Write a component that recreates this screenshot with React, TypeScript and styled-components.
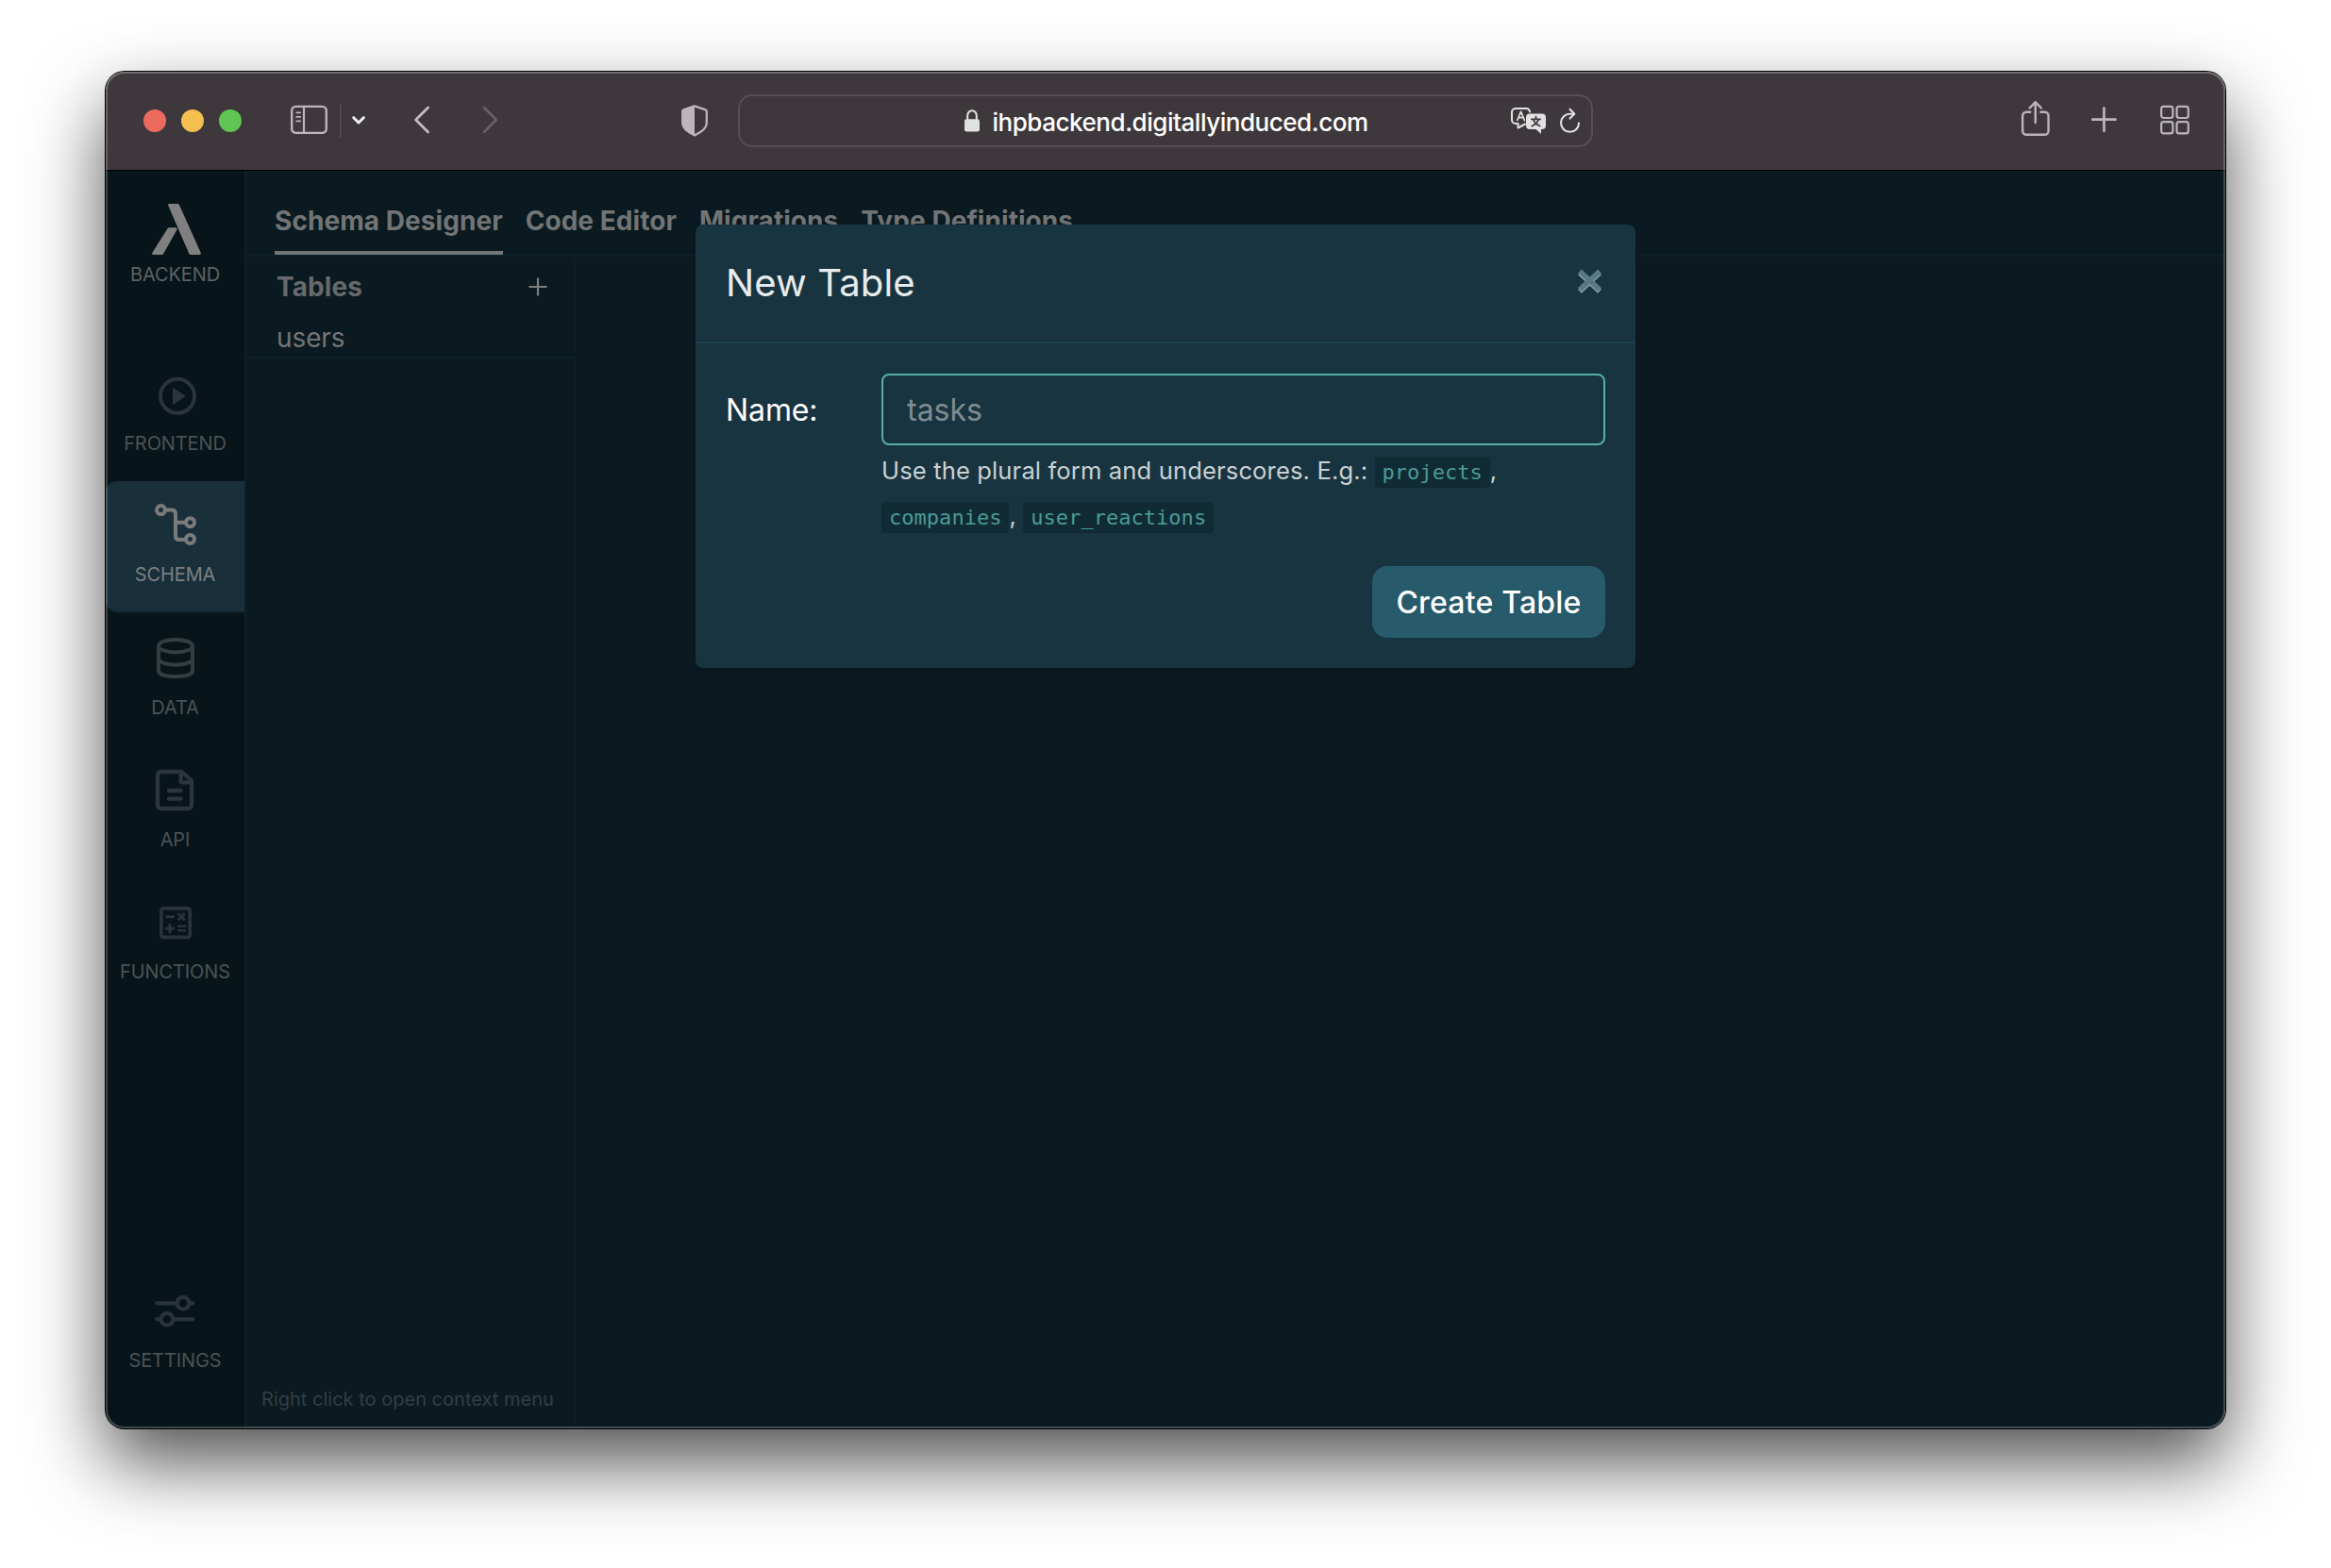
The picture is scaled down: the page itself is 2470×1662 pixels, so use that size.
import React from "react";
import styled, { createGlobalStyle } from "styled-components";

const GlobalStyle = createGlobalStyle`
  *, *::before, *::after { box-sizing: border-box; }
  body {
    margin: 0;
    background: #fff;
    font-family: Inter, "Liberation Sans", sans-serif;
    -webkit-font-smoothing: antialiased;
  }
  svg { display: block; flex: none; overflow: visible; }
`;

const Desktop = styled.div`
  width: 2470px;
  height: 1662px;
  padding: 76px 112px 148px;
  overflow: hidden;
`;

const Window = styled.div`
  position: relative;
  display: flex;
  flex-direction: column;
  height: 100%;
  border-radius: 20px;
  overflow: hidden;
  box-shadow: 0 0 0 1px #000, 0 36px 80px rgba(0, 0, 0, 0.69);

  &::after {
    content: "";
    position: absolute;
    inset: 0;
    z-index: 3;
    border-radius: 20px;
    box-shadow: inset 0 0 0 2px rgba(255, 255, 255, 0.22), inset 0 1px 0 rgba(255, 255, 255, 0.14);
    pointer-events: none;
  }
`;

/* ---------- browser chrome ---------- */

const TitleBar = styled.header`
  display: flex;
  align-items: center;
  height: 105px;
  flex: none;
  background: #3e383c;
  border-bottom: 1px solid #000;
  color: #bcb6bb;
`;

const Zone = styled.div<{ $end?: boolean }>`
  width: 670px;
  flex: none;
  display: flex;
  align-items: center;
  justify-content: ${(p) => (p.$end ? "flex-end" : "flex-start")};
  padding: ${(p) => (p.$end ? "0 38px 0 0" : "0 32px 0 40px")};
`;

const Lights = styled.div`
  display: flex;
  gap: 16px;
  margin-right: 52px;
`;

const Light = styled.span<{ $color: string }>`
  width: 24px;
  height: 24px;
  border-radius: 50%;
  background: ${(p) => p.$color};
`;

const Divider = styled.span`
  width: 2px;
  height: 36px;
  margin: 0 11px 0 13px;
  background: #504a4e;
`;

const NavArrows = styled.div`
  display: flex;
  gap: 56px;
  margin-left: 52px;
  margin-right: auto;
`;

const AddressBar = styled.div`
  display: grid;
  grid-template-columns: 1fr auto 1fr;
  align-items: center;
  width: 906px;
  height: 56px;
  padding: 0 12px 0 14px;
  border: 2px solid #565055;
  border-radius: 15px;
`;

const Url = styled.div`
  grid-column: 2;
  display: flex;
  align-items: center;
  gap: 13px;
  color: #fff;
  font-size: 26px;
  font-weight: 500;
  line-height: 32px;
  letter-spacing: -0.46px;

  span { padding-top: 3px; }
`;

const BarActions = styled.div`
  display: flex;
  justify-content: flex-end;
  gap: 15px;
  color: #e2e0e2;
`;

const WindowActions = styled.div`
  display: flex;
  gap: 44px;

  svg:last-child { margin-left: 2px; }
`;

/* ---------- application ---------- */

const Page = styled.div`
  position: relative;
  display: flex;
  flex: 1;
  min-height: 0;
  background: #0b1a20;
`;

const Sidebar = styled.nav`
  display: flex;
  flex-direction: column;
  width: 149px;
  padding: 35px 0 32px;
  background: #071419;
  border-right: 2px solid #0c2027;
`;

const Brand = styled.div`
  display: flex;
  flex-direction: column;
  align-items: center;
  gap: 9px;
  height: 154px;
  flex: none;

  svg { margin-left: 3px; }
`;

const NavLabel = styled.span<{ $color: string }>`
  color: ${(p) => p.$color};
  font-size: 20px;
  font-weight: 400;
  line-height: 24px;
  letter-spacing: -0.1px;
`;

const NavItem = styled.a<{ $active?: boolean; $last?: boolean }>`
  display: flex;
  flex-direction: column;
  align-items: center;
  gap: ${(p) => (p.$active ? 15 : 16)}px;
  height: 140px;
  flex: none;
  padding-top: 24px;
  margin-top: ${(p) => (p.$last ? "auto" : 0)};
  border-radius: 12px 0 0 12px;
  border-bottom: 2px solid ${(p) => (p.$active ? "#0d222a" : "transparent")};
  background: ${(p) => (p.$active ? "#192f3a" : "transparent")};
  background-clip: padding-box;
`;

const Main = styled.main`
  flex: 1;
  display: flex;
  flex-direction: column;
  min-width: 0;
`;

const Tabs = styled.div`
  display: flex;
  align-items: flex-end;
  gap: 24px;
  height: 91px;
  flex: none;
  padding-left: 30px;
  border-bottom: 2px solid #0c2027;
`;

const Tab = styled.a<{ $active?: boolean }>`
  padding-bottom: 15px;
  border-bottom: 4px solid ${(p) => (p.$active ? "#737677" : "transparent")};
  color: #727576;
  font-size: 28px;
  font-weight: 700;
  line-height: 34px;
  letter-spacing: 0.06px;
  white-space: nowrap;
`;

const TablePanel = styled.section`
  flex: 1;
  display: flex;
  flex-direction: column;
  width: 350px;
  border-right: 2px solid #0c1e25;
`;

const PanelHeader = styled.div`
  display: flex;
  align-items: center;
  justify-content: space-between;
  padding: 15px 29px 0 32px;
  color: #666a6c;
  font-size: 28px;
  font-weight: 700;
  line-height: 34px;
  letter-spacing: 0.1px;
`;

const TableRow = styled.div`
  margin-top: 20px;
  padding: 0 32px 3px;
  border-bottom: 2px solid #0c2027;
  color: #737678;
  font-size: 28px;
  font-weight: 400;
  line-height: 34px;
  letter-spacing: -0.1px;
`;

const Note = styled.p`
  margin: auto 0 19px;
  padding-left: 16px;
  color: #343e43;
  font-size: 20px;
  font-weight: 400;
  line-height: 24px;
  letter-spacing: 0.01px;
  white-space: nowrap;
`;

/* ---------- modal ---------- */

const Overlay = styled.div`
  position: absolute;
  inset: 0;
  z-index: 2;
  display: flex;
  justify-content: center;
  align-items: flex-start;
  padding-top: 57px;
`;

const Modal = styled.div`
  width: 996px;
  border-radius: 8px;
  background: #183440;
  box-shadow: 0 1px 5px rgba(0, 0, 0, 0.22);
`;

const ModalHeader = styled.div`
  display: flex;
  justify-content: space-between;
  align-items: flex-start;
  height: 126px;
  padding: 38px 36px 0 32px;
  border-bottom: 2px solid #1e404f;
`;

const Title = styled.h5`
  margin: 0;
  color: #e8ebec;
  font-size: 40px;
  font-weight: 430;
  line-height: 48px;
  letter-spacing: 0.13px;
`;

const CloseButton = styled.button`
  margin: 9px 0 0;
  padding: 0;
  border: 0;
  background: none;
`;

const Form = styled.form`
  display: flex;
  flex-direction: column;
  padding: 32px;
`;

const Field = styled.div`
  display: grid;
  grid-template-columns: 165px 1fr;
`;

const Label = styled.label`
  padding-top: 20px;
  color: #fff;
  font-size: 32px;
  font-weight: 380;
  line-height: 38px;
  letter-spacing: -0.1px;
`;

const Input = styled.input`
  width: 100%;
  height: 76px;
  padding: 0 24px 0 25px;
  border: 2px solid #56b0a8;
  border-radius: 8px;
  outline: none;
  background: transparent;
  font: 380 32px Inter, "Liberation Sans", sans-serif;

  &::placeholder { color: #7f8d92; opacity: 1; }
`;

const Hint = styled.small`
  display: block;
  margin-top: 3px;
  color: #c9d1d4;
  font-size: 25.6px;
  font-weight: 370;
  line-height: 48px;
  letter-spacing: 0.12px;
`;

const Code = styled.code`
  padding: 4px 8px;
  border-radius: 4px;
  background: #102b36;
  color: #4b9c94;
  font: 22px "DejaVu Sans Mono", monospace;
  letter-spacing: 0.03px;
`;

const Submit = styled.button`
  align-self: flex-end;
  width: 247px;
  height: 76px;
  margin-top: 29px;
  padding: 0;
  border: 0;
  border-radius: 16px;
  background: #275a6a;
  color: #fff;
  font: 450 32px Inter, "Liberation Sans", sans-serif;
  letter-spacing: 0.2px;
`;

/* ---------- icons ---------- */

const line = { fill: "none", stroke: "currentColor", strokeLinecap: "round", strokeLinejoin: "round" } as const;

const SidebarIcon = () => (
  <svg width="39" height="44" {...line}>
    <rect x="1.2" y="6.9" width="36.6" height="28" rx="4.5" strokeWidth="2.4" />
    <path d="M14 7v28" strokeWidth="2.2" />
    <path d="M6.2 13.3h4M6.2 17.9h4M6.2 22.4h4" strokeWidth="1.7" />
  </svg>
);

const ChevronIcon = () => (
  <svg width="14" height="44" {...line} stroke="#f1eff1" strokeWidth="3">
    <path d="M1.7 18.7 7 24l5.3-5.3" />
  </svg>
);

const ArrowIcon = ({ forward }: { forward?: boolean }) => (
  <svg width="16" height="44" {...line} stroke={forward ? "#665f65" : "#c4bec3"} strokeWidth="2.7">
    <path d={forward ? "M2 8l12.8 13L2 34" : "M14.6 8 1.6 21l13 13"} />
  </svg>
);

const ShieldIcon = () => (
  <svg width="28" height="44" {...line} strokeWidth="2.3">
    <path d="M14 6.4 2.4 10.3Q1.2 10.8 1.2 12v12.5c0 5.6 4.8 9.2 12.8 12.9 8-3.7 12.8-7.3 12.8-12.9V12q0-1.2-1.2-1.7Z" />
    <path d="M14 6.4 2.4 10.3Q1.2 10.8 1.2 12v12.5c0 5.6 4.8 9.2 12.8 12.9Z" fill="currentColor" stroke="none" />
  </svg>
);

const LockIcon = () => (
  <svg width="16" height="24" viewBox="0 0 16 24">
    <path d="M3.2 12V6.6a4.8 5.4 0 0 1 9.6 0V12" fill="none" stroke="#e2e1e2" strokeWidth="2" />
    <rect y="10.2" width="16" height="13.3" rx="2.2" fill="#e2e1e2" />
  </svg>
);

const TranslateIcon = () => (
  <svg width="37" height="28" {...line} strokeWidth="2">
    <path d="M15 17.5 7.6 21.5v-4.5H5a4 4 0 0 1-4-4V5a4 4 0 0 1 4-4h11a4 4 0 0 1 4 3.5" />
    <path d="M6.8 13.5 10.6 4.3l3.8 9.2M8 10.6h5.2" strokeWidth="1.7" />
    <path d="M20 6.5h13a4 4 0 0 1 4 4V19a4 4 0 0 1-4 4h-1v5l-5.5-5H20a4 4 0 0 1-4-4v-8.5a4 4 0 0 1 4-4Z" fill="currentColor" stroke="none" />
    <path d="M26.5 9.5v2.3M21.8 12.3h9.4M29.3 12.5q-1.5 5-7 7M23.7 12.5q1.5 5 7 7" stroke="#3e383c" strokeWidth="1.7" />
  </svg>
);

const ReloadIcon = () => (
  <svg width="21" height="28" {...line} strokeWidth="2.1">
    <path d="M20 16.5a9.5 9.5 0 1 1-9.5-9.7h4" />
    <path d="M10.5 1.8 15.3 6.7l-4.8 4.9" />
  </svg>
);

const ShareIcon = () => (
  <svg width="30" height="44" {...line} strokeWidth="2.4">
    <path d="M9.3 12.8H5.2a4 4 0 0 0-4 4v16a4 4 0 0 0 4 4h19.4a4 4 0 0 0 4-4v-16a4 4 0 0 0-4-4h-4.1M14.8 24V2.8M8.7 8.5l6.1-6.3 6.1 6.3" />
  </svg>
);

const PlusIcon = () => (
  <svg width="27" height="44" {...line} strokeWidth="2.7">
    <path d="M1.4 20.7h24.2M13.5 8.6v24.2" />
  </svg>
);

const GridIcon = () => (
  <svg width="31" height="44" {...line} strokeWidth="2.2">
    {[1.2, 17.6].map((x) =>
      [6.8, 23.2].map((y) => <rect key={`${x}-${y}`} x={x} y={y} width="12.2" height="12.2" rx="2.4" />)
    )}
  </svg>
);

const LogoIcon = () => (
  <svg width="52" height="54" fill="#808080" stroke="#808080" strokeWidth="3" strokeLinejoin="round">
    <path d="M18.7 1.5h8.8L50.4 52.5h-9.6Z" />
    <path d="M18 26.7h7.2L10.7 52.5H1.7Z" />
  </svg>
);

const PlayIcon = () => (
  <svg width="49" height="48">
    <circle cx="27" cy="25.8" r="18" fill="none" stroke="#2b343b" strokeWidth="4" />
    <path d="M22 16.6v18.6l13.7-9.3Z" fill="#2b343b" />
  </svg>
);

const SchemaIcon = () => (
  <svg width="49" height="48" fill="none" stroke="#7b7b7b" strokeWidth="4">
    <circle cx="9.5" cy="6.6" r="4.5" />
    <circle cx="40.5" cy="19.7" r="4.5" />
    <circle cx="40.5" cy="37.4" r="4.5" />
    <path d="M14 6.6h7q4 0 4 4v23.4q0 4 4 4h7M25 19.7h11" />
  </svg>
);

const DataIcon = () => (
  <svg width="49" height="48" fill="none" stroke="#363d40" strokeWidth="4">
    <ellipse cx="25" cy="10.7" rx="18" ry="6.7" />
    <path d="M7 10.7v26.3C7 40.5 14 43 25 43s18-2.5 18-6V10.7" />
    <path d="M7 24c0 4 8 6.7 18 6.7S43 28 43 24" />
  </svg>
);

const ApiIcon = () => (
  <svg width="49" height="48" fill="none" stroke="#2c353c" strokeWidth="4.3" strokeLinecap="round" strokeLinejoin="round">
    <path d="M31.5 4H9.5A3.5 3.5 0 0 0 6 7.5v32A3.5 3.5 0 0 0 9.5 43h29a3.5 3.5 0 0 0 3.5-3.5V13.5Z" />
    <path d="M30.7 5v10.3h10.5M18 24h12.5M18 32.7h12.5" />
  </svg>
);

const FunctionsIcon = () => (
  <svg width="49" height="48" fill="none" stroke="#2a333a" strokeWidth="3">
    <rect x="9.8" y="8.9" width="30.4" height="30.4" rx="2.5" strokeWidth="3.7" />
    <path d="M14.3 17.7H24M27.8 14.2l7 7M34.8 14.2l-7 7M14 30.2h10M19 25.2v10" />
    <path d="M27 27.7h9M27 32.3h9" strokeWidth="2.6" />
  </svg>
);

const SettingsIcon = () => (
  <svg width="49" height="48" fill="none" stroke="#2a333a" strokeWidth="4.2" strokeLinecap="round">
    <path d="M5.2 15.3h22M40 15.3h3.5M5.2 32.3h4M23 32.3h20.5" />
    <circle cx="33" cy="15.3" r="6.4" />
    <circle cx="16" cy="32.3" r="6.4" />
  </svg>
);

const AddIcon = () => (
  <svg width="20" height="20" stroke="#7b7e80" strokeWidth="2.2">
    <path d="M.5 10h19M10 .5v19" />
  </svg>
);

const CloseIcon = () => (
  <svg width="25" height="25" strokeWidth="5.6">
    <path d="M2 4.2 23 23.7M23 4.2 2 23.7" stroke="#8fa2aa" />
    <path d="M2 2.5 23 22M23 2.5 2 22" stroke="#5a7987" />
  </svg>
);

const navItems = [
  { label: "FRONTEND", Icon: PlayIcon },
  { label: "SCHEMA", Icon: SchemaIcon, active: true },
  { label: "DATA", Icon: DataIcon },
  { label: "API", Icon: ApiIcon },
  { label: "FUNCTIONS", Icon: FunctionsIcon },
  { label: "SETTINGS", Icon: SettingsIcon, last: true },
];

const tabs = ["Schema Designer", "Code Editor", "Migrations", "Type Definitions"];

export default function App() {
  return (
    <Desktop>
      <GlobalStyle />
      <Window>
        <TitleBar>
          <Zone>
            <Lights>
              <Light $color="#ed6a5e" />
              <Light $color="#f5bf4f" />
              <Light $color="#61c554" />
            </Lights>
            <SidebarIcon />
            <Divider />
            <ChevronIcon />
            <NavArrows>
              <ArrowIcon />
              <ArrowIcon forward />
            </NavArrows>
            <ShieldIcon />
          </Zone>
          <AddressBar>
            <Url>
              <LockIcon />
              <span>ihpbackend.digitallyinduced.com</span>
            </Url>
            <BarActions>
              <TranslateIcon />
              <ReloadIcon />
            </BarActions>
          </AddressBar>
          <Zone $end>
            <WindowActions>
              <ShareIcon />
              <PlusIcon />
              <GridIcon />
            </WindowActions>
          </Zone>
        </TitleBar>
        <Page>
          <Sidebar>
            <Brand>
              <LogoIcon />
              <NavLabel $color="#5c6264">BACKEND</NavLabel>
            </Brand>
            {navItems.map(({ label, Icon, active, last }) => (
              <NavItem key={label} $active={active} $last={last}>
                <Icon />
                <NavLabel $color={active ? "#7c8082" : "#4b5255"}>{label}</NavLabel>
              </NavItem>
            ))}
          </Sidebar>
          <Main>
            <Tabs>
              {tabs.map((tab, i) => (
                <Tab key={tab} $active={i === 0}>{tab}</Tab>
              ))}
            </Tabs>
            <TablePanel>
              <PanelHeader>
                Tables
                <AddIcon />
              </PanelHeader>
              <TableRow>users</TableRow>
              <Note>Right click to open context menu</Note>
            </TablePanel>
          </Main>
          <Overlay>
            <Modal>
              <ModalHeader>
                <Title>New Table</Title>
                <CloseButton type="button" aria-label="Close">
                  <CloseIcon />
                </CloseButton>
              </ModalHeader>
              <Form>
                <Field>
                  <Label htmlFor="table-name">Name:</Label>
                  <div>
                    <Input id="table-name" placeholder="tasks" />
                    <Hint>
                      Use the plural form and underscores. E.g.: <Code>projects</Code>, <Code>companies</Code>,{" "}
                      <Code>user_reactions</Code>
                    </Hint>
                  </div>
                </Field>
                <Submit type="button">Create Table</Submit>
              </Form>
            </Modal>
          </Overlay>
        </Page>
      </Window>
    </Desktop>
  );
}
